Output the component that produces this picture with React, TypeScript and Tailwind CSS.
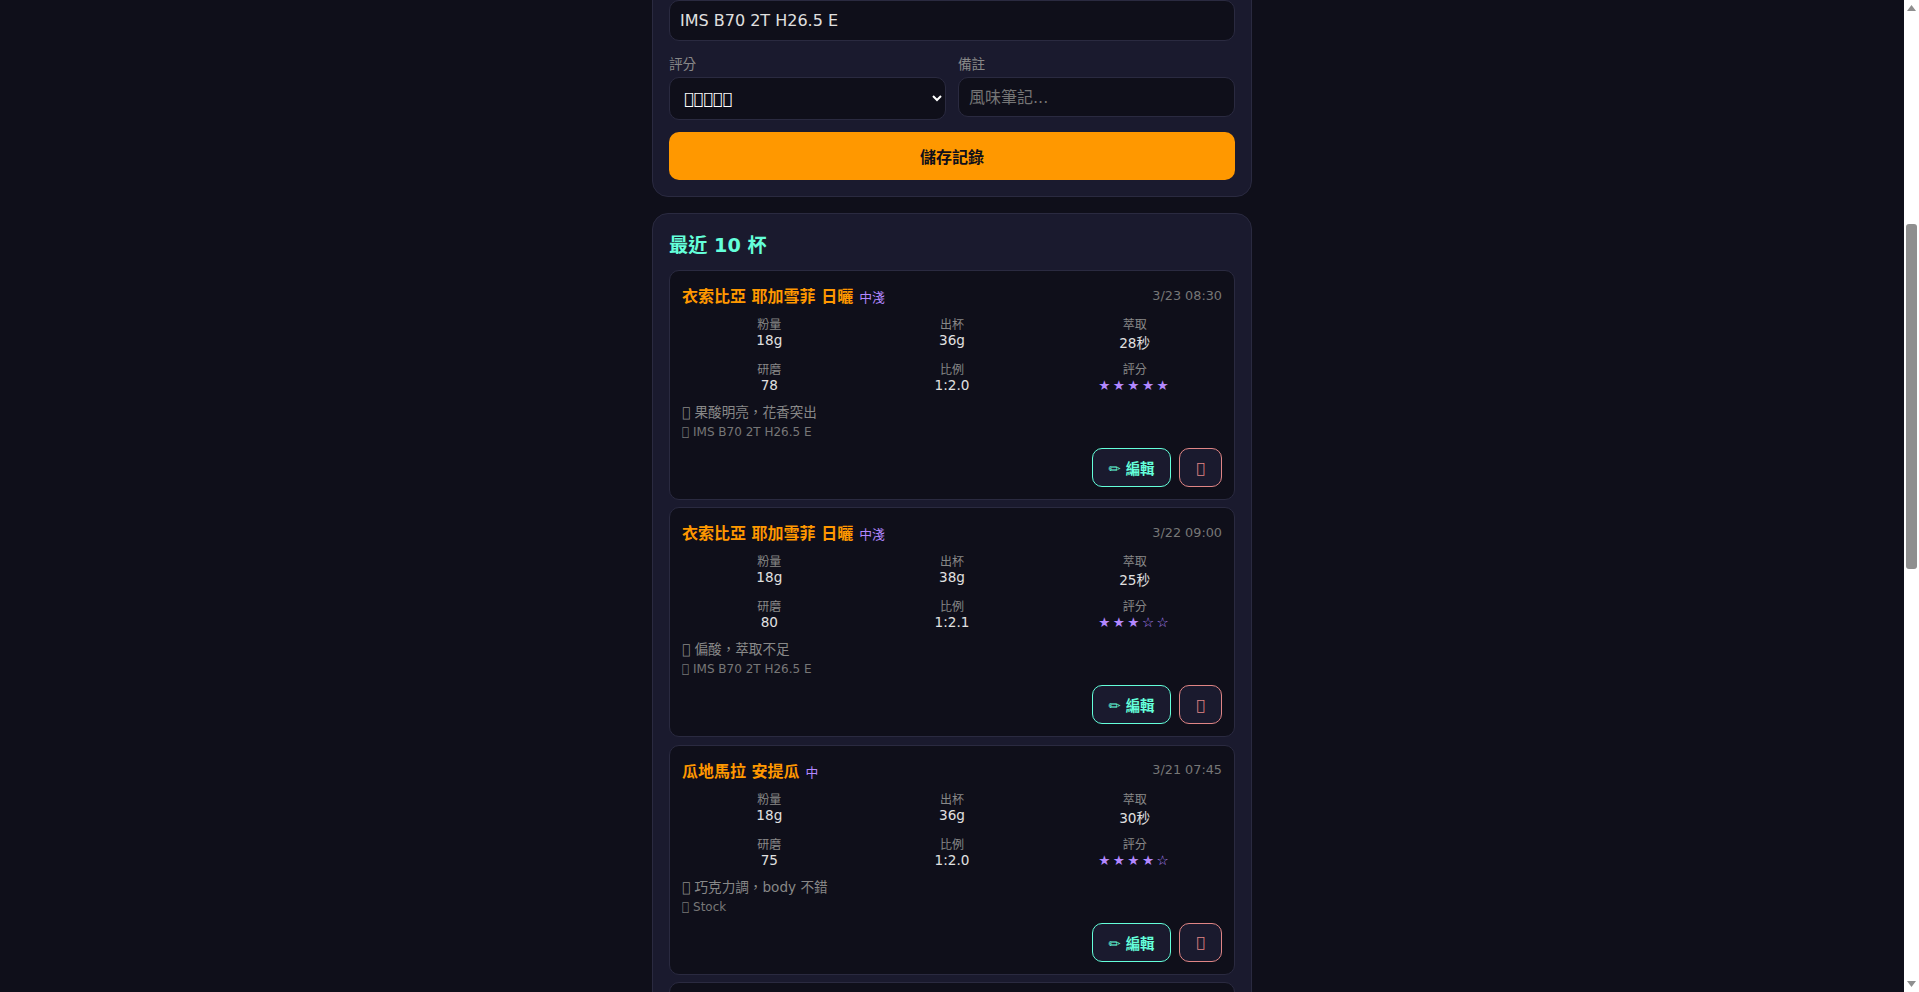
import React from "react";

const font = "[font-family:'DejaVu_Sans','Noto_Sans_CJK_TC',sans-serif]";

// private use code point, no font has it so it draws the empty box seen in the reference
const box = "\uE000";

type Brew = {
  bean: string;
  roast: string;
  date: string;
  dose: string;
  out: string;
  time: string;
  grind: string;
  ratio: string;
  stars: string;
  note: string;
  grinder: string;
};

const brews: Brew[] = [
  { bean: "衣索比亞 耶加雪菲 日曬", roast: "中淺", date: "3/23 08:30", dose: "18g", out: "36g", time: "28秒", grind: "78", ratio: "1:2.0", stars: "★★★★★", note: "果酸明亮\uFF0C花香突出", grinder: "IMS B70 2T H26.5 E" },
  { bean: "衣索比亞 耶加雪菲 日曬", roast: "中淺", date: "3/22 09:00", dose: "18g", out: "38g", time: "25秒", grind: "80", ratio: "1:2.1", stars: "★★★☆☆", note: "偏酸\uFF0C萃取不足", grinder: "IMS B70 2T H26.5 E" },
  { bean: "瓜地馬拉 安提瓜", roast: "中", date: "3/21 07:45", dose: "18g", out: "36g", time: "30秒", grind: "75", ratio: "1:2.0", stars: "★★★★☆", note: "巧克力調\uFF0Cbody 不錯", grinder: "Stock" },
];

function Stat({ label, value, accent }: { label: string; value: string; accent?: boolean }) {
  return (
    <div className="text-center">
      <div className="text-[12px] text-[#888]">{label}</div>
      <div className={accent ? "text-[13.6px] tracking-[2.4px] text-[#b388ff]" : "text-[13.6px] text-[#e0e0e0]"}>{value}</div>
    </div>
  );
}

function BrewCard({ brew }: { brew: Brew }) {
  return (
    <div className="mb-[7.4px] rounded-[10px] border border-[#2a2a40] bg-[#0f0f1a] p-3">
      <div className="mb-[8px] flex items-center justify-between">
        <div className="flex items-baseline">
          <span className="text-[16px] font-bold text-[#ff9800]">{brew.bean}</span>
          <span className="ml-[6px] text-[12.8px] text-[#b388ff]">{brew.roast}</span>
        </div>
        <span className="text-[12.8px] text-[#777]">{brew.date}</span>
      </div>
      <div className="grid grid-cols-3 gap-2">
        <Stat label="粉量" value={brew.dose} />
        <Stat label="出杯" value={brew.out} />
        <Stat label="萃取" value={brew.time} />
        <Stat label="研磨" value={brew.grind} />
        <Stat label="比例" value={brew.ratio} />
        <Stat label="評分" value={brew.stars} accent />
      </div>
      <div className="mt-[8px] text-[13.6px] text-[#888]">{box} {brew.note}</div>
      <div className="mt-[4px] text-[12px] text-[#777]">{box} {brew.grinder}</div>
      <div className="mt-[9px] flex justify-end gap-[8px]">
        <button className="h-[39px] w-[79px] rounded-[10px] border border-[#64ffda] bg-[#1a1a2e] text-[14.4px] font-semibold text-[#64ffda]">✏ 編輯</button>
        <button className="h-[39px] w-[43px] rounded-[10px] border border-[#e08585] bg-[#1a1a2e] text-[14.4px] text-[#e08585]">{box}</button>
      </div>
    </div>
  );
}

function Scrollbar() {
  return (
    <div className="flex h-full w-[15px] shrink-0 flex-col items-center bg-white">
      <svg width="9" height="6" viewBox="0 0 9 6" className="mt-[5px]">
        <path d="M4.5 0 9 6H0z" fill="#8f8f8f" />
      </svg>
      <div className="mt-[213px] h-[345px] w-[11px] rounded-[3px] bg-[#8f8f8f]" />
      <svg width="9" height="6" viewBox="0 0 9 6" className="mt-auto mb-[5px]">
        <path d="M4.5 6 9 0H0z" fill="#8f8f8f" />
      </svg>
    </div>
  );
}

export default function App() {
  return (
    <div className={`flex h-screen overflow-hidden bg-[#0f0f1a] [line-height:normal] ${font}`}>
      <div className="min-w-0 flex-1">
        <div className="mx-auto -mt-[17px] w-[600px]">
          <div className="mb-4 rounded-[16px] border border-[#2a2a40] bg-[#1a1a2e] p-4">
            <input
              readOnly
              value="IMS B70 2T H26.5 E"
              className="h-[41px] w-full rounded-[10px] border border-[#2a2a40] bg-[#0f0f1a] px-[10px] text-[16px] text-[#e0e0e0] outline-none"
            />
            <div className="mt-[14px] grid grid-cols-2 items-start gap-3">
              <div>
                <label className="mb-[3px] block text-[13.6px] leading-[19px] text-[#888]">評分</label>
                <select className="h-[43px] w-full rounded-[10px] border border-[#2a2a40] bg-[#0f0f1a] px-[10px] text-[16px] text-white outline-none">
                  <option>{box.repeat(5)}</option>
                </select>
              </div>
              <div>
                <label className="mb-[3px] block text-[13.6px] leading-[19px] text-[#888]">備註</label>
                <input
                  placeholder="風味筆記..."
                  className="h-[40px] w-full rounded-[10px] border border-[#2a2a40] bg-[#0f0f1a] px-[10px] text-[16px] text-[#e0e0e0] outline-none placeholder:text-[#757575]"
                />
              </div>
            </div>
            <button className="mt-[12px] h-[48px] w-full rounded-[10px] bg-[#ff9800] text-[16px] font-bold text-[#0f0f1a]">儲存記錄</button>
          </div>
          <div className="rounded-[16px] border border-[#2a2a40] bg-[#1a1a2e] px-4 pt-4 pb-2">
            <h2 className="mb-[8px] text-[19.2px] leading-[32px] font-bold text-[#64ffda]">最近 10 杯</h2>
            {brews.map((b) => (
              <BrewCard key={b.date} brew={b} />
            ))}
            <div className="h-[60px] rounded-[10px] border border-[#2a2a40] bg-[#0f0f1a]" />
          </div>
        </div>
      </div>
      <Scrollbar />
    </div>
  );
}
